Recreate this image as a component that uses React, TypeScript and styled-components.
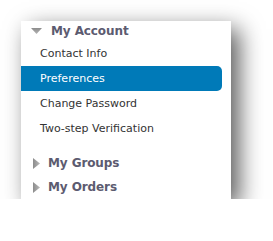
import styled, { createGlobalStyle } from "styled-components"

const GlobalStyle = createGlobalStyle`
  html, body {
    margin: 0;
    padding: 0;
    background: #fff;
  }
`

const Page = styled.div`
  padding: 21px 0 0 21px;
  font-family: "DejaVu Sans", Verdana, sans-serif;
`

const Card = styled.nav`
  width: 210px;
  height: 178px;
  box-sizing: border-box;
  padding-bottom: 2px;
  background: #fff;
  box-shadow: 8px 8px 22px rgba(0, 0, 0, 0.65);
`

const Section = styled.div`
  & + & {
    margin-top: 4px;
  }
`

const Header = styled.div`
  display: flex;
  align-items: center;
  height: 20px;
  color: #5c5b70;
  font-size: 12px;
  font-weight: bold;
  letter-spacing: -0.1px;
`

const Caret = styled.span<{ $open?: boolean }>`
  display: flex;
  align-items: center;
  justify-content: center;
  width: ${(p) => (p.$open ? "30px" : "27px")};
  padding-left: ${(p) => (p.$open ? "0" : "3px")};
  box-sizing: border-box;
`

const Items = styled.ul`
  list-style: none;
  margin: 0;
  padding: 0 0 8px;
`

const Item = styled.li<{ $active?: boolean }>`
  height: 25px;
  line-height: 25px;
  width: 201px;
  padding-left: 19px;
  box-sizing: border-box;
  font-size: 11px;
  color: ${(p) => (p.$active ? "#fff" : "#333")};
  background: ${(p) => (p.$active ? "#007ab8" : "transparent")};
  border-radius: 0 5px 5px 0;
`

function DownArrow() {
  return (
    <svg width="11" height="6" viewBox="0 0 11 6">
      <defs>
        <linearGradient id="dg" x1="0" y1="0" x2="0" y2="1">
          <stop offset="0" stopColor="#8c8c8c" />
          <stop offset="1" stopColor="#b5b5b5" />
        </linearGradient>
      </defs>
      <path d="M0 0 L11 0 L5.5 6 Z" fill="url(#dg)" />
    </svg>
  )
}

function RightArrow() {
  return (
    <svg width="7" height="11" viewBox="0 0 7 11">
      <defs>
        <linearGradient id="rg" x1="0" y1="0" x2="1" y2="0">
          <stop offset="0" stopColor="#8c8c8c" />
          <stop offset="1" stopColor="#b8b8b8" />
        </linearGradient>
      </defs>
      <path d="M0 0 L7 5.5 L0 11 Z" fill="url(#rg)" />
    </svg>
  )
}

const accountLinks = ["Contact Info", "Preferences", "Change Password", "Two-step Verification"]

export default function App() {
  return (
    <>
      <GlobalStyle />
      <Page>
        <Card>
          <Section>
            <Header>
              <Caret $open>
                <DownArrow />
              </Caret>
              My Account
            </Header>
            <Items>
              {accountLinks.map((label) => (
                <Item key={label} $active={label === "Preferences"}>
                  {label}
                </Item>
              ))}
            </Items>
          </Section>
          <Section>
            <Header>
              <Caret>
                <RightArrow />
              </Caret>
              My Groups
            </Header>
          </Section>
          <Section>
            <Header>
              <Caret>
                <RightArrow />
              </Caret>
              My Orders
            </Header>
          </Section>
        </Card>
      </Page>
    </>
  )
}
